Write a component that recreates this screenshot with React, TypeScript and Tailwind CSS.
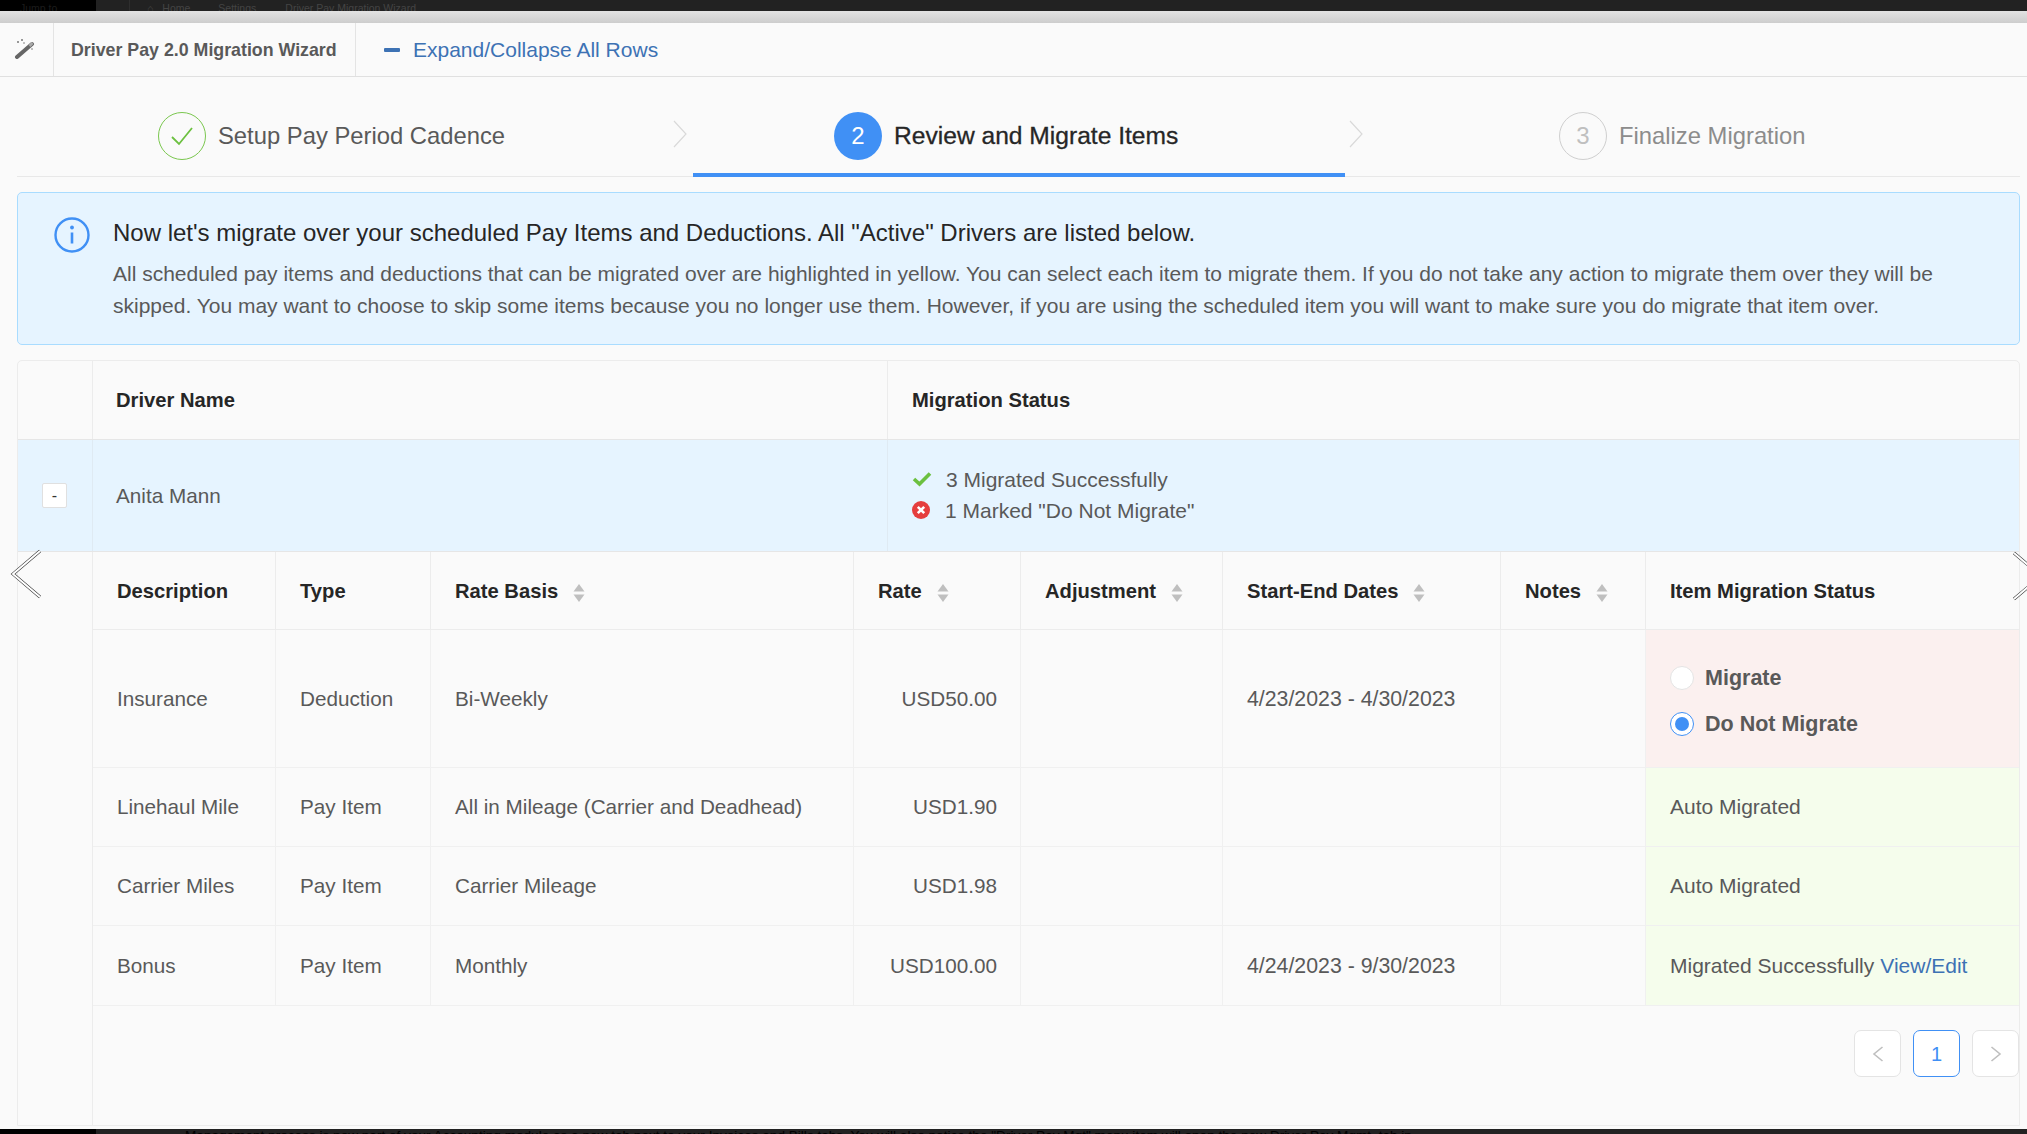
import * as React from "react";

const FONT = "font-['Liberation_Sans',Arial,sans-serif]";
const GRID =
  "grid grid-cols-[183px_155px_423px_167px_202px_278px_145px_373px]";

function Sort() {
  return (
    <svg width="12" height="18" viewBox="0 0 12 18" className="ml-[15px] shrink-0 mt-[2px]" aria-hidden>
      <path d="M6 0 L11.5 7.5 H0.5 Z" fill="#bfbfbf" />
      <path d="M6 18 L11.5 10.5 H0.5 Z" fill="#bfbfbf" />
    </svg>
  );
}

function Chevron() {
  return (
    <svg width="14" height="28" viewBox="0 0 14 28" fill="none" aria-hidden className="shrink-0">
      <path d="M1 1 L13 14 L1 27" stroke="#d9d9d9" strokeWidth="1.2" />
    </svg>
  );
}

function Wand() {
  return (
    <svg width="22" height="22" viewBox="0 0 22 22" aria-hidden>
      <path d="M3 20 L18 7" stroke="#666" strokeWidth="4" strokeLinecap="round" />
      <path d="M15.5 9 L18.5 6" stroke="#aaa" strokeWidth="2.5" />
      <circle cx="4" cy="5" r="1" fill="#777" />
      <circle cx="8" cy="3" r="1" fill="#777" />
      <circle cx="10" cy="6" r="0.8" fill="#777" />
      <circle cx="18" cy="12" r="0.8" fill="#777" />
    </svg>
  );
}

function Info() {
  return (
    <svg width="36" height="36" viewBox="0 0 36 36" fill="none" aria-hidden>
      <circle cx="18" cy="18" r="16.5" stroke="#4090f5" strokeWidth="2.4" />
      <circle cx="18" cy="10.5" r="1.9" fill="#4090f5" />
      <path d="M18 15.5 V26.5" stroke="#4090f5" strokeWidth="2.6" />
    </svg>
  );
}

function Th({ label, sort, border = true }: { label: string; sort?: boolean; border?: boolean }) {
  return (
    <div className={`flex items-center px-[24px] pt-[2px] h-[78px] border-b border-[#ececec] ${border ? "border-r" : ""}`}>
      <span className="font-bold text-[20.2px] text-[#262626]">{label}</span>
      {sort && <Sort />}
    </div>
  );
}

function Td({ children, right, last }: { children?: React.ReactNode; right?: boolean; last?: boolean }) {
  return (
    <div
      className={`flex items-center border-b border-[#f0f0f0] text-[20.7px] text-[#595959] ${
        last ? "" : "border-r"
      } ${right ? "justify-end pl-[24px] pr-[23px]" : "px-[24px]"}`}
    >
      {children}
    </div>
  );
}

function Radio({ label, checked }: { label: string; checked?: boolean }) {
  return (
    <label className="flex items-center gap-[11px]">
      <span
        className={`flex h-[24px] w-[24px] items-center justify-center rounded-full bg-white border ${
          checked ? "border-[#4090f5]" : "border-[#e4e4e4]"
        }`}
      >
        {checked && <span className="h-[14px] w-[14px] rounded-full bg-[#4090f5]" />}
      </span>
      <span className="font-bold text-[21.5px] text-[#595959]">{label}</span>
    </label>
  );
}

function PageButton({ children, active }: { children: React.ReactNode; active?: boolean }) {
  return (
    <div
      className={`flex h-[47px] w-[47px] items-center justify-center rounded-[7px] bg-white border text-[20px] ${
        active ? "border-[#4090f5] text-[#4090f5]" : "border-[#e4e4e4]"
      }`}
    >
      {children}
    </div>
  );
}

function Pager({ dir }: { dir: "left" | "right" }) {
  return (
    <svg width="12" height="18" viewBox="0 0 12 18" fill="none" aria-hidden>
      <path d={dir === "left" ? "M10.5 2 L2 9 L10.5 16" : "M1.5 2 L10 9 L1.5 16"} stroke="#bfbfbf" strokeWidth="1.6" />
    </svg>
  );
}

function SlideArrow({ dir }: { dir: "left" | "right" }) {
  const d = dir === "left" ? "M30 2 L3 25 L30 48" : "M3 2 L30 25 L3 48";
  return (
    <svg width="33" height="50" viewBox="0 0 33 50" fill="none" aria-hidden>
      <path d={d} stroke="#333" strokeWidth="3" />
      <path d={d} stroke="#fff" strokeWidth="2" />
    </svg>
  );
}

const rows = [
  { desc: "Linehaul Mile", type: "Pay Item", basis: "All in Mileage (Carrier and Deadhead)", rate: "USD1.90" },
  { desc: "Carrier Miles", type: "Pay Item", basis: "Carrier Mileage", rate: "USD1.98" },
];

export default function App() {
  return (
    <div className={`${FONT} relative flex h-[1134px] w-[2027px] flex-col overflow-hidden bg-[#fafafa]`}>
      {/* dimmed app chrome behind the modal */}
      <div className="flex h-[11px] shrink-0 overflow-hidden bg-[#222] text-[10.5px] leading-[16px] text-[#444]">
        <div className="flex w-[96px] gap-2 bg-black pl-[20px] text-[#1c1c1c]">Jump to</div>
        <div className="ml-[33px] w-px bg-[#2e2e2e]" />
        <div className="ml-[17px] flex">
          <span>⌂</span>
          <span className="ml-[9px]">Home</span>
          <span className="ml-[28px]">Settings</span>
          <span className="ml-[29px]">Driver Pay Migration Wizard</span>
        </div>
      </div>
      <div className="h-[12px] shrink-0 bg-gradient-to-b from-[#e2e2e2] to-[#cdcdcd]" />

      <header className="flex h-[54px] shrink-0 items-stretch border-b border-[#e0e0e0] bg-[#fafafa]">
        <div className="flex w-[54px] items-center justify-center border-r border-[#e4e4e4] pr-[3px] pb-[3px]">
          <Wand />
        </div>
        <div className="flex w-[302px] items-center border-r border-[#e4e4e4] pl-[17px] pt-[2px] text-[17.8px] font-bold text-[#595959]">
          Driver Pay 2.0 Migration Wizard
        </div>
        <div className="flex items-center pl-[28px] pt-[1px] text-[21px] text-[#3d72b4]">
          <span className="mr-[13px] h-[4px] w-[16px] rounded-[1px] bg-[#3d72b4]" />
          Expand/Collapse All Rows
        </div>
      </header>

      <div className="mx-[17px] flex h-[100px] w-[2003px] shrink-0 border-b border-[#e8e8e8]">
        <div className="flex w-[676px] items-center pl-[141px] pt-[18px]">
          <span className="flex h-[48px] w-[48px] shrink-0 items-center justify-center rounded-full border border-[#7ac74f]">
            <svg width="24" height="20" viewBox="0 0 24 20" fill="none" aria-hidden>
              <path d="M2 11 L9 18 L22 2" stroke="#6cc040" strokeWidth="1.8" />
            </svg>
          </span>
          <span className="ml-[12px] text-[23.8px] text-[#595959]">Setup Pay Period Cadence</span>
          <span className="ml-auto mr-[6px] -mt-[3px]">
            <Chevron />
          </span>
        </div>
        <div className="-mb-px flex w-[652px] items-center border-b-[4px] border-[#4090f5] pl-[141px] pt-[22px]">
          <span className="flex h-[48px] w-[48px] shrink-0 items-center justify-center rounded-full bg-[#4090f5] text-[24px] text-white">
            2
          </span>
          <span className="ml-[12px] text-[24.6px] text-[#262626] [-webkit-text-stroke:0.3px_#262626]">
            Review and Migrate Items
          </span>
        </div>
        <div className="flex flex-1 items-center pt-[18px]">
          <span className="ml-[4px] -mt-[3px]">
            <Chevron />
          </span>
          <span className="ml-[196px] flex h-[48px] w-[48px] shrink-0 items-center justify-center rounded-full border border-[#cfcfcf] text-[24px] text-[#bfbfbf]">
            3
          </span>
          <span className="ml-[12px] text-[23.8px] text-[#8c8c8c]">Finalize Migration</span>
        </div>
      </div>

      <section className="mx-[17px] mt-[15px] flex h-[153px] w-[2003px] shrink-0 rounded-[5px] border border-[#a9dcff] bg-[#e6f4ff] pl-[36px] pt-[24px]">
        <Info />
        <div className="ml-[23px]">
          <h2 className="text-[24px] leading-[32px] text-[#262626]">
            Now let's migrate over your scheduled Pay Items and Deductions. All "Active" Drivers are listed below.
          </h2>
          <p className="mt-[9px] w-[1830px] text-[21px] leading-[32px] text-[#595959]">
            All scheduled pay items and deductions that can be migrated over are highlighted in yellow. You can select
            each item to migrate them. If you do not take any action to migrate them over they will be skipped. You may
            want to choose to skip some items because you no longer use them. However, if you are using the scheduled
            item you will want to make sure you do migrate that item over.
          </p>
        </div>
      </section>

      <section className="mx-[17px] mt-[15px] flex h-[766px] w-[2003px] shrink-0 flex-col rounded-t-[5px] border border-[#ececec]">
        <div className="flex h-[79px] shrink-0 border-b border-[#e6e6e6] text-[20.2px] font-bold text-[#262626]">
          <div className="w-[75px] border-r border-[#ececec]" />
          <div className="flex w-[795px] items-center border-r border-[#ececec] pl-[23px]">Driver Name</div>
          <div className="flex items-center pl-[24px]">Migration Status</div>
        </div>
        <div className="flex h-[112px] shrink-0 border-b border-[#e6e6e6] bg-[#e6f4ff] text-[20.7px] text-[#595959]">
          <div className="flex w-[75px] items-center justify-center border-r border-[#dfeaf3]">
            <span className="-ml-[1px] flex h-[25px] w-[25px] items-center justify-center rounded-[2px] border border-[#e0e0e0] bg-white text-[16px] text-[#333]">
              -
            </span>
          </div>
          <div className="flex w-[795px] items-center border-r border-[#dfeaf3] pl-[23px]">Anita Mann</div>
          <div className="flex flex-col justify-center gap-[4px] pb-[2px] pl-[24px] text-[21px] leading-[27px]">
            <div className="flex items-center">
              <svg width="20" height="16" viewBox="0 0 20 16" fill="none" aria-hidden className="mr-[14px]">
                <path d="M2 8 L7.5 13 L18 2.5" stroke="#6cc040" strokeWidth="3.6" />
              </svg>
              3 Migrated Successfully
            </div>
            <div className="flex items-center">
              <svg width="20" height="20" viewBox="0 0 20 20" aria-hidden className="mr-[14px] -ml-[1px]">
                <circle cx="10" cy="10" r="9" fill="#e53e3e" />
                <path d="M6.8 6.8 L13.2 13.2 M13.2 6.8 L6.8 13.2" stroke="#fff" strokeWidth="2.6" />
              </svg>
              1 Marked "Do Not Migrate"
            </div>
          </div>
        </div>

        <div className="flex flex-1">
          <div className="w-[75px] shrink-0 border-r border-[#ececec]" />
          <div className="flex-1">
            <div className={GRID}>
              <Th label="Description" />
              <Th label="Type" />
              <Th label="Rate Basis" sort />
              <Th label="Rate" sort />
              <Th label="Adjustment" sort />
              <Th label="Start-End Dates" sort />
              <Th label="Notes" sort />
              <Th label="Item Migration Status" border={false} />
            </div>
            <div className={`${GRID} h-[138px]`}>
              <Td>Insurance</Td>
              <Td>Deduction</Td>
              <Td>Bi-Weekly</Td>
              <Td right>USD50.00</Td>
              <Td />
              <Td>
                <span className="pt-[3px] text-[21.3px]">4/23/2023 - 4/30/2023</span>
              </Td>
              <Td />
              <div className="flex flex-col justify-center gap-[13px] border-b border-[#f0f0f0] bg-[#fbf0ef] pl-[24px] pt-[5px] text-[21.5px]">
                <Radio label="Migrate" />
                <Radio label="Do Not Migrate" checked />
              </div>
            </div>
            {rows.map((r) => (
              <div key={r.desc} className={`${GRID} h-[79px]`}>
                <Td>{r.desc}</Td>
                <Td>{r.type}</Td>
                <Td>{r.basis}</Td>
                <Td right>{r.rate}</Td>
                <Td />
                <Td />
                <Td />
                <div className="flex items-center border-b border-[#f0f0f0] bg-[#f5fdec] pl-[24px] text-[21px] text-[#595959]">
                  Auto Migrated
                </div>
              </div>
            ))}
            <div className={`${GRID} h-[80px]`}>
              <Td>Bonus</Td>
              <Td>Pay Item</Td>
              <Td>Monthly</Td>
              <Td right>USD100.00</Td>
              <Td />
              <Td>
                <span className="pt-[2px] text-[21.3px]">4/24/2023 - 9/30/2023</span>
              </Td>
              <Td />
              <div className="flex items-center border-b border-[#f0f0f0] bg-[#f5fdec] pl-[24px] text-[21px] text-[#595959]">
                Migrated Successfully<span className="ml-[6px] text-[#3d72b4]">View/Edit</span>
              </div>
            </div>
            <div className="mt-[24px] flex justify-end gap-[12px]">
              <PageButton>
                <Pager dir="left" />
              </PageButton>
              <PageButton active>1</PageButton>
              <PageButton>
                <Pager dir="right" />
              </PageButton>
            </div>
          </div>
        </div>
      </section>

      <div className="mt-[3px] flex h-[5px] shrink-0 overflow-hidden bg-[#222]">
        <div className="w-[96px] bg-black" />
        <div className="ml-[89px] whitespace-nowrap text-[13.6px] leading-[14px] text-black">
          Management process is now part of your Accounting module as a new tab next to your Invoices and Bills tabs.
          You will also notice the "Driver Pay Mgt" menu item will open the new Driver Pay Mgmt. tab in
        </div>
      </div>

      {/* carousel arrows floating over the dialog edge */}
      <div className="absolute left-[10px] top-[549px]">
        <SlideArrow dir="left" />
      </div>
      <div className="absolute left-[2011px] top-[551px]">
        <SlideArrow dir="right" />
      </div>
    </div>
  );
}
